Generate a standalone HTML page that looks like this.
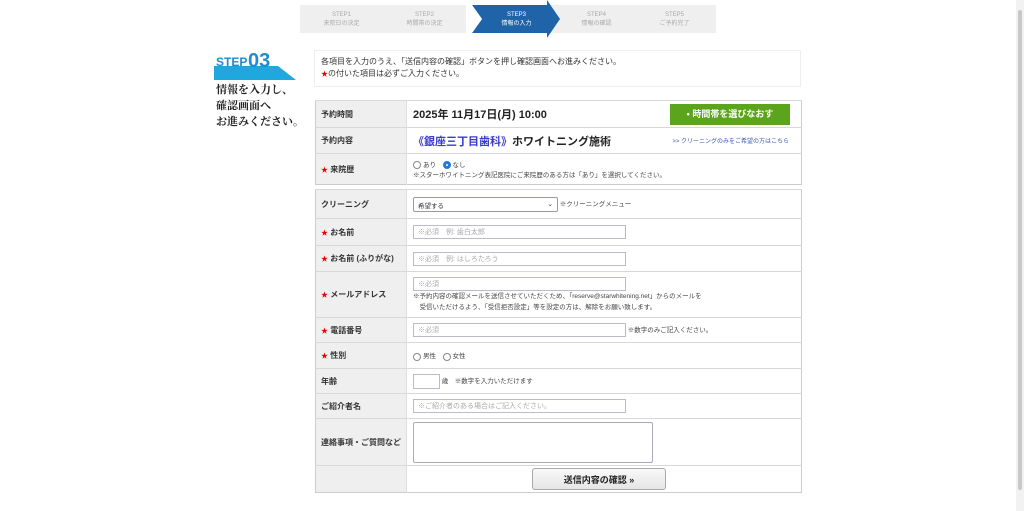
<!DOCTYPE html>
<html><head><meta charset="utf-8"><style>
*{box-sizing:border-box;margin:0;padding:0}
body{width:1024px;height:511px;background:#fff;font-family:"Liberation Sans","Noto Sans CJK JP",sans-serif;position:relative;overflow:hidden;color:#333}
.abs{position:absolute}
.step{position:absolute;top:5px;height:28px;width:83px;color:#aaa;font-size:6px;text-align:center;line-height:9px;padding-top:6px}
table{position:absolute;left:315px;width:487px;border-collapse:collapse;border:1px solid #ccc}
td{border-top:1px solid #d8d8d8;font-size:8px;vertical-align:middle;padding:0 6px}
td.l{width:91px;background:#efefef;font-weight:bold;color:#333;border-right:1px solid #ddd;white-space:nowrap;padding:0 5px}
.st{color:#e00;font-size:7px}
input.t{height:14px;border:1px solid #bbc;font-size:7px;padding:0 4px;color:#aaa;width:213px;font-family:inherit}
.n{font-size:6.5px;color:#444}
.r{display:inline-block;width:8px;height:8px;border:1px solid #888;border-radius:50%;vertical-align:middle;margin-right:2px}
.fx{display:flex;align-items:center;justify-content:space-between}
</style></head><body>
<div class="abs" style="left:300px;top:5px;width:416px;height:28px;background:#efefef"></div>
<div class="step" style="left:300px">STEP1<br>来院日の決定</div>
<div class="step" style="left:383px">STEP2<br>時間帯の決定</div>
<svg class="abs" style="left:466px;top:0" width="95" height="38"><polygon points="6,5 81,5 81,0 94,19 81,38 81,33 6,33 16,19" fill="#1f64a8"/><polygon points="0,5 6,5 16,19 6,33 0,33" fill="#fff"/></svg>
<div class="step" style="left:475px;color:#fff">STEP3<br>情報の入力</div>
<div class="step" style="left:555px">STEP4<br>情報の確認</div>
<div class="step" style="left:633px">STEP5<br>ご予約完了</div>
<div class="abs" style="left:1016px;top:0;width:8px;height:511px;background:#f2f2f2"></div>
<div class="abs" style="left:1018px;top:10px;width:4px;height:480px;background:#c8c8c8;border-radius:2px"></div>
<svg class="abs" style="left:214px;top:48px" width="82" height="34"><polygon points="0,18 64,18 82,32 0,32" fill="#1fa8de"/><text x="2" y="18" font-size="12" fill="#1f8ccf" font-family="Liberation Sans" font-weight="bold">STEP</text><text x="34" y="19" font-size="20" fill="#1f8ccf" font-family="Liberation Sans" font-weight="bold">03</text></svg>
<div class="abs" style="left:216px;top:81px;font-family:'Noto Serif CJK SC',serif;font-weight:bold;font-size:11px;line-height:16px;color:#222">情報を入力し、<br>確認画面へ<br>お進みください。</div>
<div class="abs" style="left:314px;top:50px;width:487px;height:37px;border:1px solid #eee;font-size:8px;padding:5px 6px;line-height:12px;color:#333">各項目を入力のうえ、「送信内容の確認」ボタンを押し確認画面へお進みください。<br><span class="st">★</span>の付いた項目は必ずご入力ください。</div>
<table style="top:100px">
<tr style="height:27px"><td class="l">予約時間</td><td><div class="fx" style="font-size:11px;font-weight:bold;color:#222">2025年 11月17日(月) 10:00<span style="background:#5ba41c;color:#fff;font-size:9px;width:120px;height:21px;line-height:21px;text-align:center;margin-right:5px">• 時間帯を選びなおす</span></div></td></tr>
<tr style="height:26px"><td class="l">予約内容</td><td><div class="fx" style="font-size:11px;font-weight:bold;color:#222"><span><span style="color:#3a3ad0">《銀座三丁目歯科》</span>ホワイトニング施術</span><span style="font-size:6px;color:#3a5ab0;font-weight:normal;margin-right:6px">&gt;&gt; クリーニングのみをご希望の方はこちら</span></div></td></tr>
<tr style="height:31px"><td class="l"><span class="st">★</span> 来院歴</td><td class="n"><span class="r"></span>あり　<span class="r" style="border:3px solid #1e7be0"></span>なし<br>※スターホワイトニング表記医院にご来院歴のある方は「あり」を選択してください。</td></tr>
</table>
<table style="top:189px">
<tr style="height:29px"><td class="l">クリーニング</td><td class="n"><span style="display:inline-block;width:145px;height:15px;border:1px solid #99a;border-radius:2px;padding:2px 4px;color:#333;vertical-align:middle">希望する<span style="float:right">⌄</span></span> ※クリーニングメニュー</td></tr>
<tr style="height:27px"><td class="l"><span class="st">★</span> お名前</td><td><input class="t" value="※必須　例: 歯白太郎"></td></tr>
<tr style="height:26px"><td class="l"><span class="st">★</span> お名前 (ふりがな)</td><td><input class="t" value="※必須　例: はしろたろう"></td></tr>
<tr style="height:46px"><td class="l"><span class="st">★</span> メールアドレス</td><td class="n"><input class="t" value="※必須"><br><span style="line-height:11px">※予約内容の確認メールを送信させていただくため、「reserve@starwhitening.net」からのメールを<br>　受信いただけるよう、「受信拒否設定」等を設定の方は、解除をお願い致します。</span></td></tr>
<tr style="height:25px"><td class="l"><span class="st">★</span> 電話番号</td><td class="n"><input class="t" value="※必須"> ※数字のみご記入ください。</td></tr>
<tr style="height:26px"><td class="l"><span class="st">★</span> 性別</td><td class="n"><span class="r"></span>男性　<span class="r"></span>女性</td></tr>
<tr style="height:25px"><td class="l">年齢</td><td class="n"><input class="t" style="width:27px;height:15px"> 歳　※数字を入力いただけます</td></tr>
<tr style="height:25px"><td class="l">ご紹介者名</td><td><input class="t" value="※ご紹介者のある場合はご記入ください。"></td></tr>
<tr style="height:47px"><td class="l">連絡事項・ご質問など</td><td><div style="width:240px;height:41px;border:1px solid #aab;border-radius:2px"></div></td></tr>
<tr style="height:27px"><td class="l"></td><td style="text-align:center"><span style="display:inline-block;width:134px;height:22px;line-height:22px;border:1px solid #aaa;border-radius:3px;background:linear-gradient(#f8f8f8,#e6e6e6);font-weight:bold;font-size:9px;color:#222;margin-left:-10px">送信内容の確認 »</span></td></tr>
</table>
</body></html>
